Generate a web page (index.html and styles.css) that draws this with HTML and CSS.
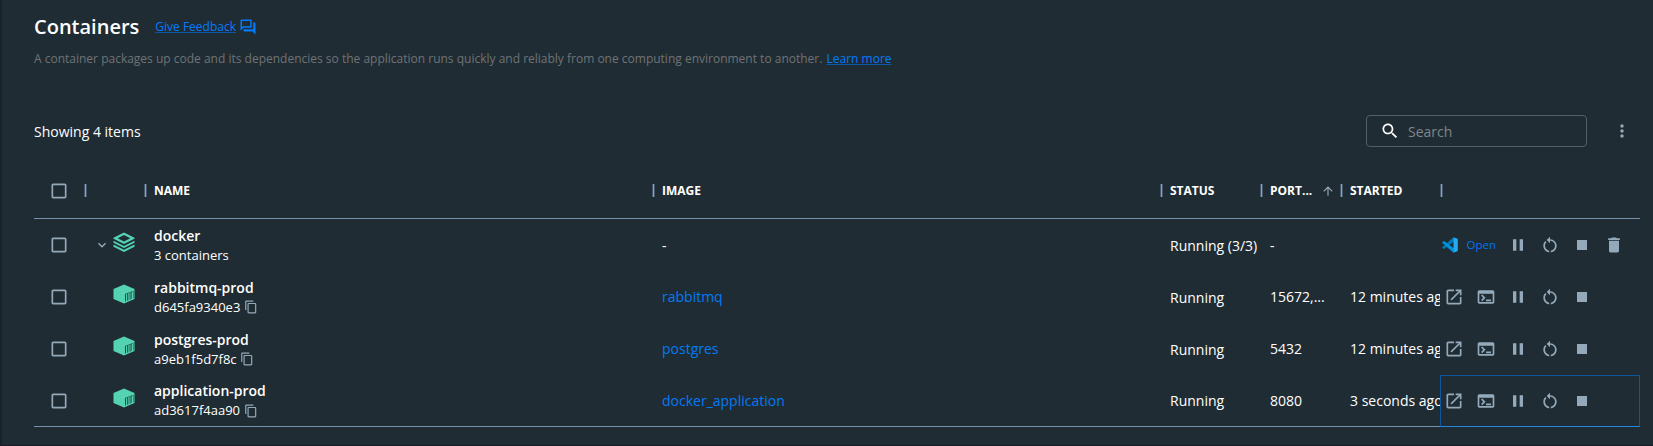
FILE: index.html
```html
<!DOCTYPE html>
<html lang="en">
<head>
<meta charset="utf-8">
<title>Containers</title>
<link rel="stylesheet" href="styles.css">
</head>
<body>
<svg class="sprite" aria-hidden="true">
  <symbol id="forum" viewBox="0 0 24 24"><path d="M15 4v7H5.17L4 12.17V4h11m1-2H3c-.55 0-1 .45-1 1v14l4-4h10c.55 0 1-.45 1-1V3c0-.55-.45-1-1-1zm5 4h-2v9H6v2c0 .55.45 1 1 1h11l4 4V7c0-.55-.45-1-1-1z"/></symbol>
  <symbol id="search" viewBox="0 0 24 24"><path d="M15.5 14h-.79l-.28-.27C15.41 12.59 16 11.11 16 9.5 16 5.91 13.09 3 9.5 3S3 5.91 3 9.5 5.91 16 9.5 16c1.61 0 3.09-.59 4.23-1.57l.27.28v.79l5 4.99L20.49 19l-4.99-5zm-6 0C7.01 14 5 11.99 5 9.5S7.01 5 9.5 5 14 7.01 14 9.5 11.99 14 9.5 14z"/></symbol>
  <symbol id="more" viewBox="0 0 24 24"><path d="M12 8c1.1 0 2-.9 2-2s-.9-2-2-2-2 .9-2 2 .9 2 2 2zm0 2c-1.1 0-2 .9-2 2s.9 2 2 2 2-.9 2-2-.9-2-2-2zm0 6c-1.1 0-2 .9-2 2s.9 2 2 2 2-.9 2-2-.9-2-2-2z"/></symbol>
  <symbol id="box" viewBox="0 0 24 24"><path d="M19 5v14H5V5h14m0-2H5c-1.1 0-2 .9-2 2v14c0 1.100.9 2 2 2h14c1.100 0 2-.9 2-2V5c0-1.100-.9-2-2-2z"/></symbol>
  <symbol id="chevron" viewBox="0 0 24 24"><path d="M16.59 8.59 12 13.17 7.41 8.59 6 10l6 6 6-6z"/></symbol>
  <symbol id="arrow-up" viewBox="0 0 24 24"><path d="M4 12l1.410 1.410L11 7.830V20h2V7.830l5.580 5.590L20 12l-8-8-8 8z"/></symbol>
  <symbol id="layers" viewBox="0 0 22 20"><path fill-rule="evenodd" d="M11 .5 21.500 5.700v1L11 12 .5 6.700v-1zM11 2.900 4.700 6.200 11 9.400l6.300-3.200z"/><path d="M.5 8.700 11 14l10.500-5.300v2.100L11 16 .5 10.800zM.5 12.600 11 17.800l10.500-5.200v2.100L11 19.900.5 14.700z"/></symbol>
  <symbol id="cube" viewBox="0 0 22 20"><path d="M11 .5 21.500 5v10L11 19.500.5 15V5z"/><path class="cut" d="M12 10l1-.4v7.600l-1 .4zM14.200 9.200l1.100-.4v7.600l-1.100.4zM16.600 8.300l.9-.4v7.500l-.9.4zM18.400 7.600l.6-.3v7.500l-.6.3zM20 7l.5-.3v7.500l-.5.3zM12 10l8.500-3.300v.5L12 10.500z"/></symbol>
  <symbol id="copy" viewBox="0 0 24 24"><path d="M16 1H4c-1.100 0-2 .9-2 2v14h2V3h12V1zm3 4H8c-1.100 0-2 .9-2 2v14c0 1.100.9 2 2 2h11c1.100 0 2-.9 2-2V7c0-1.100-.9-2-2-2zm0 16H8V7h11v14z"/></symbol>
  <symbol id="open" viewBox="0 0 24 24"><path d="M19 19H5V5h7V3H5c-1.110 0-2 .9-2 2v14c0 1.100.89 2 2 2h14c1.100 0 2-.9 2-2v-7h-2v7zM14 3v2h3.590l-9.830 9.830 1.410 1.410L19 6.410V10h2V3h-7z"/></symbol>
  <symbol id="terminal" viewBox="0 0 24 24"><path d="M20 4H4c-1.110 0-2 .9-2 2v12c0 1.100.89 2 2 2h16c1.100 0 2-.9 2-2V6c0-1.100-.89-2-2-2zm0 14H4V8h16v10zm-2-1h-6v-2h6v2zM7.500 17l-1.410-1.410L8.670 13l-2.590-2.590L7.500 9l4 4-4 4z"/></symbol>
  <symbol id="pause" viewBox="0 0 24 24"><path d="M6 19h4V5H6v14zm8-14v14h4V5h-4z"/></symbol>
  <symbol id="restart" viewBox="0 0 24 24"><path d="M12 5V2L8 6l4 4V7c3.310 0 6 2.690 6 6 0 2.970-2.170 5.430-5 5.910v2.020c3.950-.49 7-3.850 7-7.930 0-4.420-3.580-8-8-8zm-6 8c0-1.650.67-3.150 1.760-4.240L6.340 7.340C4.900 8.790 4 10.790 4 13c0 4.080 3.050 7.440 7 7.930v-2.020c-2.830-.48-5-2.940-5-5.910z"/></symbol>
  <symbol id="stop" viewBox="0 0 24 24"><path d="M6 6h12v12H6z"/></symbol>
  <symbol id="trash" viewBox="0 0 24 24"><path d="M6 19c0 1.100.9 2 2 2h8c1.100 0 2-.9 2-2V7H6v12zM19 4h-3.500l-1-1h-5l-1 1H5v2h14V4z"/></symbol>
  <symbol id="vscode" viewBox="0 0 16 16"><path fill="#0078b8" d="M11.500.2 12 4.500 2.200 12 .4 11.100V10z"/><path fill="#0091d9" d="M.4 4.900 2.200 4 12 11.500l-.5 4.300L.4 6z"/><path fill="#24aaf2" d="M11.500.2 15.300 1.800q.5.2.5.8v10.800q0 .6-.5.800L11.500 15.800z"/></symbol>
</svg>

<main class="page">
  <header class="heading">
    <h1 class="title">Containers</h1>
    <a class="link feedback">Give Feedback</a>
    <svg class="forum-icon"><use href="#forum"/></svg>
  </header>
  <p class="intro">A container packages up code and its dependencies so the application runs quickly and reliably from one computing environment to another. <a class="link learn">Learn more</a></p>

  <section class="toolbar">
    <span class="count">Showing 4 items</span>
    <div class="search"><svg class="icon"><use href="#search"/></svg><span class="placeholder">Search</span></div>
    <svg class="icon more"><use href="#more"/></svg>
  </section>

  <section class="table">
    <div class="row head">
      <div class="cell check"><svg class="icon"><use href="#box"/></svg></div>
      <div class="cell split"></div>
      <div class="cell split">NAME</div>
      <div class="cell split">IMAGE</div>
      <div class="cell split">STATUS</div>
      <div class="cell split">PORT...<svg class="sort"><use href="#arrow-up"/></svg></div>
      <div class="cell split">STARTED</div>
      <div class="cell split"></div>
    </div>

    <div class="row">
      <div class="cell check"><svg class="icon"><use href="#box"/></svg></div>
      <div class="cell kind"><svg class="expand"><use href="#chevron"/></svg><svg class="glyph"><use href="#layers"/></svg></div>
      <div class="cell name"><span class="label">docker</span><span class="sub">3 containers</span></div>
      <div class="cell">-</div>
      <div class="cell status">Running (3/3)</div>
      <div class="cell">-</div>
      <div class="cell"></div>
      <div class="cell actions"><a class="vscode"><svg class="vscode-icon"><use href="#vscode"/></svg><span class="vscode-label">Open</span></a><svg class="icon"><use href="#pause"/></svg><svg class="icon"><use href="#restart"/></svg><svg class="icon"><use href="#stop"/></svg><svg class="icon"><use href="#trash"/></svg></div>
    </div>

    <div class="row">
      <div class="cell check"><svg class="icon"><use href="#box"/></svg></div>
      <div class="cell kind"><svg class="glyph"><use href="#cube"/></svg></div>
      <div class="cell name"><span class="label">rabbitmq-prod</span><span class="sub">d645fa9340e3<svg class="copy"><use href="#copy"/></svg></span></div>
      <div class="cell image">rabbitmq</div>
      <div class="cell status">Running</div>
      <div class="cell port">15672,...</div>
      <div class="cell started">12 minutes ago</div>
      <div class="cell actions"><svg class="icon"><use href="#open"/></svg><svg class="icon"><use href="#terminal"/></svg><svg class="icon"><use href="#pause"/></svg><svg class="icon"><use href="#restart"/></svg><svg class="icon"><use href="#stop"/></svg></div>
    </div>

    <div class="row">
      <div class="cell check"><svg class="icon"><use href="#box"/></svg></div>
      <div class="cell kind"><svg class="glyph"><use href="#cube"/></svg></div>
      <div class="cell name"><span class="label">postgres-prod</span><span class="sub">a9eb1f5d7f8c<svg class="copy"><use href="#copy"/></svg></span></div>
      <div class="cell image">postgres</div>
      <div class="cell status">Running</div>
      <div class="cell port">5432</div>
      <div class="cell started">12 minutes ago</div>
      <div class="cell actions"><svg class="icon"><use href="#open"/></svg><svg class="icon"><use href="#terminal"/></svg><svg class="icon"><use href="#pause"/></svg><svg class="icon"><use href="#restart"/></svg><svg class="icon"><use href="#stop"/></svg></div>
    </div>

    <div class="row last">
      <div class="cell check"><svg class="icon"><use href="#box"/></svg></div>
      <div class="cell kind"><svg class="glyph"><use href="#cube"/></svg></div>
      <div class="cell name"><span class="label">application-prod</span><span class="sub">ad3617f4aa90<svg class="copy"><use href="#copy"/></svg></span></div>
      <div class="cell image">docker_application</div>
      <div class="cell status">Running</div>
      <div class="cell">8080</div>
      <div class="cell started">3 seconds ago</div>
      <div class="cell actions focused"><svg class="icon"><use href="#open"/></svg><svg class="icon"><use href="#terminal"/></svg><svg class="icon"><use href="#pause"/></svg><svg class="icon"><use href="#restart"/></svg><svg class="icon"><use href="#stop"/></svg></div>
    </div>
  </section>
</main>
</body>
</html>
```
FILE: styles.css
```css
* { box-sizing: border-box; }
body {
  margin: 0;
  background: #202c33;
  color: #fff;
  font-family: "Open Sans", sans-serif;
  font-size: 14px;
}
.sprite { display: none; }
svg { display: block; flex: none; fill: #94aabb; }
.page {
  height: 446px;
  padding: 14px 13px 0 32px;
  border-left: 2px solid #17222a;
  border-bottom: 1px solid #1a1c26;
  overflow: hidden;
}
.heading { display: flex; align-items: center; height: 26px; }
.title { margin: 0; font-size: 20px; font-weight: 600; line-height: 26px; }
.link { color: #007bff; text-decoration: underline; text-decoration-color: #0b57a8; }
.feedback { margin-left: 16px; padding-bottom: 2px; font-size: 12px; }
.forum-icon { width: 18px; height: 18px; margin: 0 0 1px 3.500px; fill: #007bff; }
.intro { margin: 9px 0 0; height: 20px; font-size: 12px; line-height: 20px; color: #6f7376; }
.learn { margin-left: 1px; }
.toolbar { display: flex; align-items: center; height: 32px; margin-top: 46px; }
.icon { width: 20px; height: 20px; }
.search {
  display: flex;
  align-items: center;
  gap: 8px;
  width: 221px;
  height: 32px;
  margin-left: auto;
  padding-left: 13px;
  border: 1px solid #565e63;
  border-radius: 4px;
}
.search .icon { fill: #fff; }
.placeholder { color: #7f868b; }
.more { margin: 0 8.500px 0 24.500px; }
.table { margin-top: 27px; }
.row {
  display: grid;
  grid-template-columns: 50px 60px 508px 508px 100px 80px 100px 200px;
  height: 52px;
}
.cell { display: flex; align-items: center; padding: 0 10px; min-width: 0; white-space: nowrap; }
.check { padding: 0; justify-content: center; }
.head { height: 45px; border-bottom: 1px solid #7793ac; font-size: 12px; font-weight: 700; }
.head .cell { height: 33px; align-self: start; }
.split { background: linear-gradient(90deg, #43566a 1px, #8aa2b8 1px 2px, #43566a 2px) 0 10px / 3px 13px no-repeat; }
.sort { width: 14px; height: 14px; margin-left: 9px; }
.kind { padding: 0 9.500px 6px 0; justify-content: flex-end; }
.expand { width: 16px; height: 16px; margin: 6px 3px 0 0; }
.glyph { width: 22px; height: 20px; fill: #54d3b3; }
.cut { fill: #24453f; }
.name { flex-direction: column; align-items: flex-start; justify-content: center; }
.label { font-weight: 600; line-height: 20px; }
.sub { display: flex; align-items: center; font-size: 13px; line-height: 19px; }
.copy { width: 14px; height: 14px; margin-left: 3.500px; }
.image { color: #007bf5; padding-bottom: 2px; }
.status { padding-top: 1px; }
.port { padding-bottom: 2px; }
.started { display: block; overflow: hidden; padding-right: 0; line-height: 52px; }
.actions { gap: 12px; padding: 0 0 0 4px; }
.vscode { display: flex; align-items: center; width: 56px; margin-right: -2px; margin-left: -2px; gap: 8.500px; font-size: 11.500px; color: #0073f0; }
.vscode-icon { width: 16px; height: 16px; }
.vscode-label { padding-bottom: 2px; }
.last { grid-template-rows: 51px; border-bottom: 1px solid #7793ac; }
.last .image, .last .status { padding-top: 0; padding-bottom: 0; }
.last .check, .last .kind { height: 52px; }
.focused { height: 52px; border: 1px solid #10569f; border-bottom-color: #2588e0; padding-left: 3px; }
```
